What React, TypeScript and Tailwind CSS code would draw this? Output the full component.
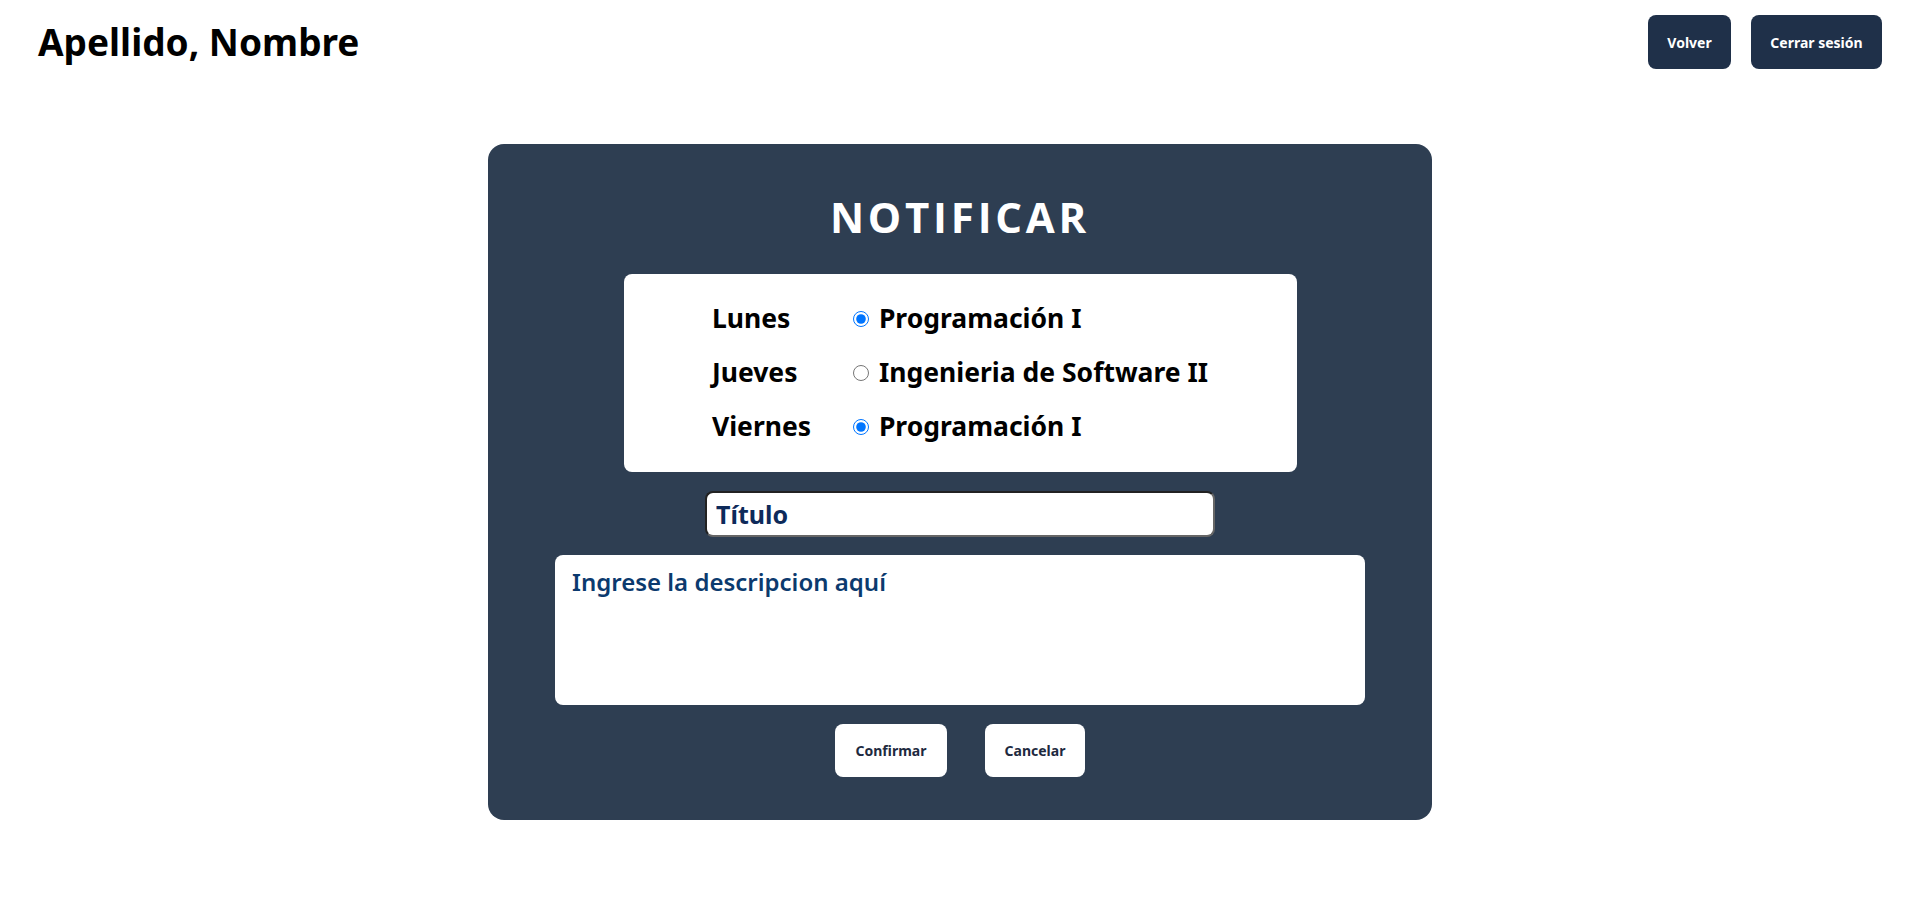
import { useState } from "react";

const clases = [
  { dia: "Lunes", materia: "Programación I", name: "lunes", checked: true },
  { dia: "Jueves", materia: "Ingenieria de Software II", name: "jueves", checked: false },
  { dia: "Viernes", materia: "Programación I", name: "viernes", checked: true },
];

export default function App() {
  const [titulo, setTitulo] = useState("");
  const [descripcion, setDescripcion] = useState("");

  return (
    <div className="min-h-screen bg-white font-['Noto_Sans',sans-serif]">
      <header className="flex items-center justify-between pl-[38px] pr-[38px] pt-[15px]">
        <h1 className="text-[37px] font-bold text-black leading-none -mt-[2px]">Apellido, Nombre</h1>
        <div className="flex gap-[20px]">
          <button
            type="button"
            className="h-[54px] w-[83px] rounded-lg bg-[#1f3049] text-white text-[14px] font-bold"
          >Volver</button>
          <button
            type="button"
            className="h-[54px] w-[131px] rounded-lg bg-[#1f3049] text-white text-[14px] font-bold"
          >Cerrar sesión</button>
        </div>
      </header>

      <div className="flex justify-center mt-[75px]">
        <div className="w-[944px] h-[676px] rounded-2xl bg-[#2e3e52] flex flex-col items-center">
          <h2 className="mt-[52px] text-[42px] leading-none font-bold text-white tracking-[0.09em] font-['Open_Sans',sans-serif]">NOTIFICAR</h2>

          <div className="mt-[36px] w-[673px] h-[198px] rounded-lg bg-white flex justify-center items-start pt-[18px]">
            <table>
              <tbody>
                {clases.map((c) => (
                  <tr key={c.name} className="h-[54px]">
                    <td className="w-[141px] text-[26.5px] font-bold text-black">{c.dia}</td>
                    <td className="text-[26.5px] font-bold text-black">
                      <label className="flex items-center gap-[10px]">
                        <input
                          type="radio"
                          name={c.name}
                          defaultChecked={c.checked}
                          className="w-4 h-4 accent-[#0075ff]"
                        />
                        {c.materia}
                      </label>
                    </td>
                  </tr>
                ))}
              </tbody>
            </table>
          </div>

          <input
            type="text"
            value={titulo}
            onChange={(e) => setTitulo(e.target.value)}
            placeholder="Título"
            className="mt-[19px] w-[510px] h-[46px] rounded-lg bg-white border-2 border-t-[#222] border-l-[#222] border-r-[#666] border-b-[#666] px-[9px] text-[25px] font-bold text-[#0d2a5a] placeholder:text-[#0d2a5a] outline-none"
          />

          <textarea
            value={descripcion}
            onChange={(e) => setDescripcion(e.target.value)}
            placeholder="Ingrese la descripcion aquí"
            className="mt-[18px] w-[810px] h-[150px] rounded-lg bg-white px-[17px] py-[9px] text-[24px] font-semibold text-[#0b3a6e] placeholder:text-[#0b3a6e] outline-none resize-none"
          />

          <div className="mt-[19px] flex gap-[38px]">
            <button
              type="button"
              className="h-[53px] w-[112px] rounded-lg bg-white text-[#1e2a40] text-[14px] font-bold"
            >Confirmar</button>
            <button
              type="button"
              className="h-[53px] w-[100px] rounded-lg bg-white text-[#1e2a40] text-[14px] font-bold"
            >Cancelar</button>
          </div>
        </div>
      </div>
    </div>
  );
}
